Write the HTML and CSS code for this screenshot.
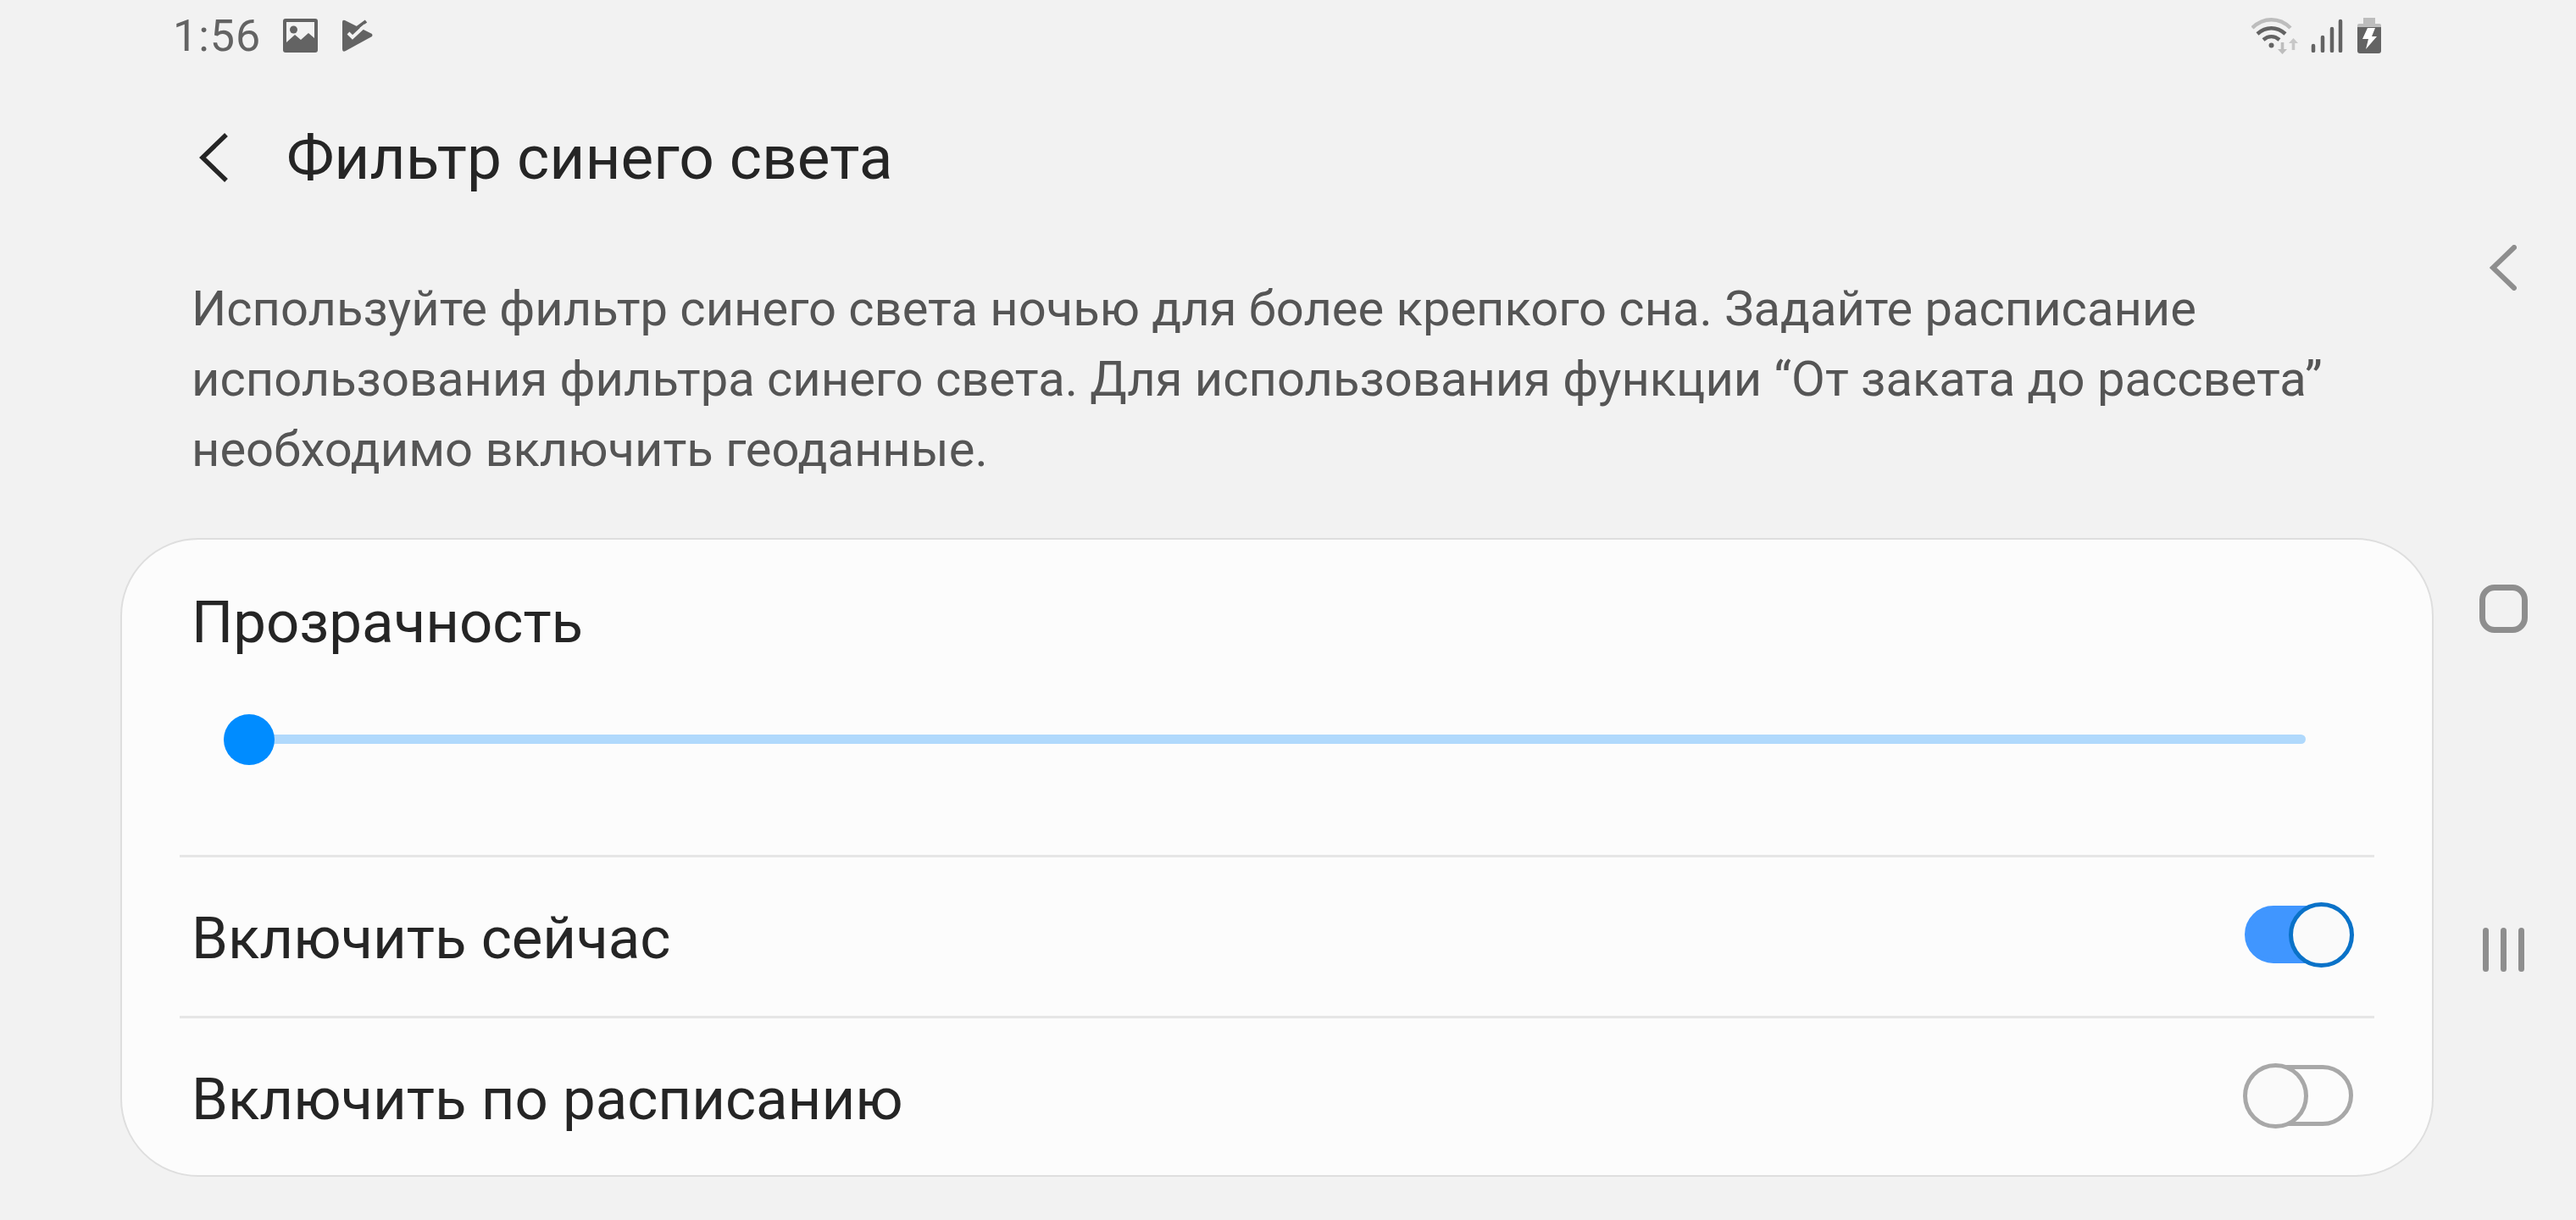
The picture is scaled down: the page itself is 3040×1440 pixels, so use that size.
FILE: index.html
```html
<!DOCTYPE html>
<html lang="ru">
<head>
  <meta charset="UTF-8" />
  <title>Фильтр синего света</title>
  <link rel="stylesheet" href="styles.css">
</head>
<body>
  <div class="screen">
    <main class="main">
      <div class="status-bar">
        <span class="time">1:56</span>
        <svg class="icon-image" viewBox="0 0 41 40">
          <path fill="#636363" fill-rule="evenodd" d="M3 0h35a3 3 0 0 1 3 3v34a3 3 0 0 1-3 3H3a3 3 0 0 1-3-3V3a3 3 0 0 1 3-3zM4 4v24l10-9 7 6 9-8 7 6V4z"/>
          <circle cx="12.500" cy="13" r="4.500" fill="#636363"/>
        </svg>
        <svg class="icon-task" viewBox="0 0 36 40">
          <path fill="#636363" d="M0 4Q0 1 3 2L35 18Q36 20 35 21L4 38Q0 40 0 36Z"/>
          <path fill="none" stroke="#636363" stroke-width="4" d="M13 14 28 3"/>
          <path fill="none" stroke="#f2f2f2" stroke-width="4" d="M7 17 12 22 27 8"/>
        </svg>
        <div class="status-right">
          <svg class="icon-wifi" viewBox="0 0 58 44">
            <path fill="none" stroke="#bdbdbd" stroke-width="4.500" d="M1 13C14 0 33 0 46 13"/>
            <path fill="none" stroke="#636363" stroke-width="4.500" d="M7 20C17 11 30 11 40 20"/>
            <path fill="none" stroke="#636363" stroke-width="4.500" d="M14 27C20 22 27 22 33 27"/>
            <circle cx="23.500" cy="33.500" r="3" fill="#636363"/>
            <path fill="#bdbdbd" d="M36.500 44 31 38h3.700V30h3.600v8H42z"/>
            <path fill="#c8c8c8" d="M49.500 25 55 31h-3.700v8h-3.600v-8H44z"/>
          </svg>
          <svg class="icon-signal" viewBox="0 0 38 40">
            <g stroke="#636363" stroke-width="4.500" stroke-linecap="round">
              <path d="M3 32V38"/>
              <path d="M14 22V38"/>
              <path d="M25 12V38"/>
              <path d="M35 3V38"/>
            </g>
          </svg>
          <svg class="icon-battery" viewBox="0 0 28 42">
            <path fill="#bdbdbd" d="M7 0h14v7h5a2 2 0 0 1 2 2v4H0V9a2 2 0 0 1 2-2h5z"/>
            <path fill="#636363" d="M0 11h28v28a3 3 0 0 1-3 3H3a3 3 0 0 1-3-3z"/>
            <path fill="#fff" d="M12 12h9l-4 10h6L10 37l3-12H6z"/>
          </svg>
        </div>
      </div>

      <header class="app-bar">
        <svg class="back-icon" viewBox="0 0 34 58">
          <path fill="none" stroke="#252525" stroke-width="5.500" d="M32 2 4 29 32 56"/>
        </svg>
        <h1 class="title">Фильтр синего света</h1>
      </header>

      <p class="description">Используйте фильтр синего света ночью для более крепкого сна. Задайте расписание использования фильтра синего света. Для использования функции “От заката до рассвета” необходимо включить геоданные.</p>

      <section class="card">
        <div class="opacity-block">
          <div class="label">Прозрачность</div>
          <div class="slider">
            <div class="slider-track"></div>
            <div class="slider-thumb"></div>
          </div>
        </div>
        <div class="row">
          <span class="label">Включить сейчас</span>
          <div class="switch switch-on"><div class="knob"></div></div>
        </div>
        <div class="row">
          <span class="label">Включить по расписанию</span>
          <div class="switch"><div class="knob"></div></div>
        </div>
      </section>
    </main>

    <nav class="nav-bar">
      <svg class="nav-back" viewBox="0 0 32 54">
        <path fill="none" stroke="#8e8e8e" stroke-width="6" stroke-linecap="round" d="M29 3 4 27 29 51"/>
      </svg>
      <div class="nav-home"></div>
      <div class="nav-recents"><span></span><span></span><span></span></div>
    </nav>
  </div>
</body>
</html>
```

FILE: styles.css
```css
:root {
  --bg: #f2f2f2;
  --card-bg: #fcfcfc;
  --text: #252525;
  --text-muted: #555;
  --line: #e6e6e6;
}

html, body {
  margin: 0;
  padding: 0;
}

body {
  font-family: Roboto, sans-serif;
  background-color: var(--bg);
  color: var(--text);
}

.screen {
  display: flex;
  width: 3040px;
  height: 1440px;
  overflow: hidden;
}

.main {
  width: 2900px;
  padding-left: 142px;
  box-sizing: border-box;
}

/* Status bar */
.status-bar {
  display: flex;
  align-items: center;
  width: 2668px;
  height: 84px;
  padding-left: 62px;
  box-sizing: border-box;
}

.time {
  font-size: 52px;
  color: #636363;
  letter-spacing: 1px;
}

.icon-image {
  width: 41px;
  height: 40px;
  margin-left: 26px;
}

.icon-task {
  width: 36px;
  height: 40px;
  margin-left: 29px;
}

.status-right {
  display: flex;
  align-items: center;
  gap: 12px;
  margin-left: auto;
}

.icon-wifi {
  width: 58px;
  height: 44px;
}

.icon-signal {
  width: 38px;
  height: 40px;
}

.icon-battery {
  width: 28px;
  height: 42px;
  margin-left: 5px;
}

/* Header */
.app-bar {
  display: flex;
  align-items: center;
  height: 204px;
  padding-left: 93px;
}

.back-icon {
  width: 34px;
  height: 58px;
}

.title {
  margin: 0 0 0 69px;
  font-size: 73px;
  font-weight: 400;
}

.description {
  width: 2660px;
  margin: 0 0 0 84px;
  font-size: 57.900px;
  line-height: 83px;
  color: var(--text-muted);
  padding-top: 35px;
}

/* Card */
.card {
  box-sizing: border-box;
  width: 2730px;
  height: 754px;
  margin-top: 63px;
  padding: 0 68px;
  background: var(--card-bg);
  border: 2px solid #dedede;
  border-radius: 92px;
}

.label {
  font-size: 69px;
  color: var(--text);
}

.opacity-block {
  height: 372px;
  padding: 57px 14px 0;
  box-sizing: border-box;
}

.slider {
  position: relative;
  margin: 68px 0 0 38px;
  width: 2457px;
  height: 60px;
}

.slider-track {
  position: absolute;
  left: 0;
  right: 0;
  top: 24px;
  height: 11px;
  border-radius: 6px;
  background: #b0d9fc;
}

.slider-thumb {
  position: absolute;
  left: 0;
  top: 0;
  width: 60px;
  height: 60px;
  border-radius: 50%;
  background: #008cff;
}

.row {
  display: flex;
  align-items: center;
  justify-content: space-between;
  height: 190px;
  padding: 0 25px 0 14px;
  box-sizing: border-box;
  border-top: 3px solid var(--line);
}

.row .label {
  margin-top: 3px;
}

/* Switches */
.switch {
  position: relative;
  box-sizing: border-box;
  width: 128px;
  height: 72px;
  margin-bottom: 5px;
  border: 5px solid #a8a8a8;
  border-radius: 36px;
}

.knob {
  position: absolute;
  left: -7px;
  top: -7px;
  box-sizing: border-box;
  width: 77px;
  height: 77px;
  border: 5px solid #a8a8a8;
  border-radius: 50%;
  background: #fafafa;
}

.switch-on {
  height: 68px;
  background: #4096ff;
  border-color: #4096ff;
}

.switch-on .knob {
  left: auto;
  right: -6px;
  top: -9px;
  border-color: #0a72c8;
}

/* Navigation */
.nav-bar {
  position: relative;
  flex: 1;
}

.nav-back {
  position: absolute;
  left: 38px;
  top: 289px;
  width: 32px;
  height: 54px;
}

.nav-home {
  position: absolute;
  left: 26px;
  top: 690px;
  box-sizing: border-box;
  width: 57px;
  height: 57px;
  border: 7px solid #8e8e8e;
  border-radius: 18px;
}

.nav-recents {
  position: absolute;
  left: 30px;
  top: 1095px;
  display: flex;
  gap: 14px;
}

.nav-recents span {
  width: 7px;
  height: 52px;
  border-radius: 4px;
  background: #8e8e8e;
}
```
